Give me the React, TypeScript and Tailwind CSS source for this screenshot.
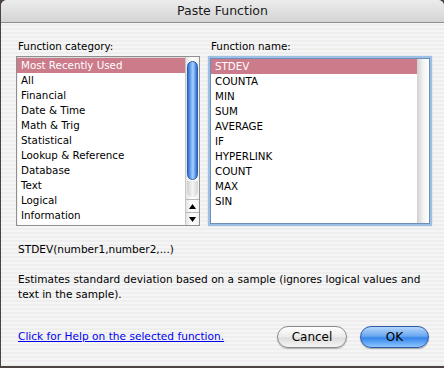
import React from 'react';

const categories = [
  'Most Recently Used',
  'All',
  'Financial',
  'Date & Time',
  'Math & Trig',
  'Statistical',
  'Lookup & Reference',
  'Database',
  'Text',
  'Logical',
  'Information',
];

const functions = ['STDEV', 'COUNTA', 'MIN', 'SUM', 'AVERAGE', 'IF', 'HYPERLINK', 'COUNT', 'MAX', 'SIN'];

const font = "font-['DejaVu_Sans','Liberation_Sans',sans-serif]";

const Row = ({ label, selected }: { label: string; selected?: boolean }) => (
  <div
    className={`h-[15px] leading-[15px] pl-[4px] whitespace-nowrap ${
      selected ? 'bg-[#cc7b8b] text-white' : 'text-black'
    }`}
  >
    {label}
  </div>
);

const Scrollbar = () => (
  <div className="w-[14px] flex flex-col border-l border-[#c8c8c8] bg-[linear-gradient(90deg,#e4e4e4,#ffffff_45%,#f2f2f2)]">
    {/* track + thumb */}
    <div className="flex-1 flex flex-col px-[1px] pt-[4px] pb-[2px]">
      <div className="h-[119px] rounded-full border border-[#2a5cb0] bg-[linear-gradient(90deg,#2f6fd8,#86b9f3_40%,#a9d0fa_55%,#5d9aea_80%,#2b66c8)]" />
      <div className="flex-1 mt-[1px] rounded-b-full bg-[linear-gradient(90deg,#cfcfcf,#f4f4f4_50%,#d6d6d6)]" />
    </div>
    {/* arrows */}
    <div className="h-[13px] border-t border-[#b8b8b8] flex items-center justify-center">
      <svg width="7" height="5" viewBox="0 0 7 5">
        <path d="M3.5 0 L7 5 L0 5 Z" fill="#000" />
      </svg>
    </div>
    <div className="h-[13px] border-t border-[#b8b8b8] flex items-center justify-center">
      <svg width="7" height="5" viewBox="0 0 7 5">
        <path d="M0 0 L7 0 L3.5 5 Z" fill="#000" />
      </svg>
    </div>
  </div>
);

const App = () => {
  return (
    <div className={`w-[444px] h-[368px] bg-[#4e4343] pl-[1px] pb-[2px] ${font}`}>
      <div className="w-[443px] h-[366px] flex flex-col rounded-t-[6px] overflow-hidden bg-[repeating-linear-gradient(0deg,#eeeeee_0px,#eeeeee_2px,#f5f5f5_2px,#f5f5f5_4px)]">
        {/* Title bar */}
        <div className="h-[23px] shrink-0 flex items-center justify-center border-b border-[#8e8e8e] bg-[linear-gradient(180deg,#ececec,#d4d4d4)] text-[12.5px] text-[#1a1a1a]">
          Paste Function
        </div>

        {/* Lists */}
        <div className="flex pl-[15px] pt-[16px] text-[10.3px]">
          <div className="w-[184px] flex flex-col">
            <div className="h-[17px] leading-[15px] pl-[2px] text-black">Function category:</div>
            <div className="h-[170px] flex border border-[#8f8f8f] bg-white shadow-[inset_0_1px_2px_rgba(0,0,0,0.2)]">
              <div className="flex-1 pt-[1px]">
                {categories.map((c, i) => (
                  <Row key={c} label={c} selected={i === 0} />
                ))}
              </div>
              <Scrollbar />
            </div>
          </div>

          <div className="ml-[8px] w-[224px] flex flex-col">
            <div className="h-[17px] leading-[15px] pl-[3px] text-black">Function name:</div>
            <div className="h-[170px] rounded-[2px] p-[2px] bg-[#9cbfe6] shadow-[0_0_1px_#5f8fcf]">
              <div className="h-full flex border border-[#6f8fb4] bg-white">
                <div className="flex-1">
                  {functions.map((f, i) => (
                    <Row key={f} label={f} selected={i === 0} />
                  ))}
                </div>
                <div className="w-[12px] bg-[linear-gradient(90deg,#d0d0d0,#f2f2f2_50%,#ffffff)]" />
              </div>
            </div>
          </div>
        </div>

        {/* Syntax and description */}
        <div className="pl-[17px] pr-[14px] text-[10.55px] text-black">
          <div className="mt-[16px] leading-[15px]">STDEV(number1,number2,...)</div>
          <div className="mt-[15px] leading-[15px]">
            Estimates standard deviation based on a sample (ignores logical values and text in the sample).
          </div>
        </div>

        {/* Footer */}
        <div className="mt-auto mb-[18px] flex items-center pl-[17px] pr-[15px]">
          <a className="text-[10.6px] text-[#0000ee] underline cursor-pointer">
            Click for Help on the selected function.
          </a>
          <div className="ml-auto flex gap-[13px]">
            <button className="w-[70px] h-[22px] rounded-full border border-[#8a8a8a] bg-[linear-gradient(180deg,#ffffff,#eaeaea_50%,#dcdcdc_55%,#f6f6f6)] text-[12px] text-black shadow-[0_1px_1px_rgba(0,0,0,0.25)]">
              Cancel
            </button>
            <button className="w-[69px] h-[22px] rounded-full border border-[#2d5aa8] bg-[linear-gradient(180deg,#b5d6fb,#6aa8ef_45%,#3585ea_55%,#8cc6ff)] text-[12px] text-black shadow-[0_1px_1px_rgba(0,0,0,0.3)]">
              OK
            </button>
          </div>
        </div>
      </div>
    </div>
  );
};

export default App;
